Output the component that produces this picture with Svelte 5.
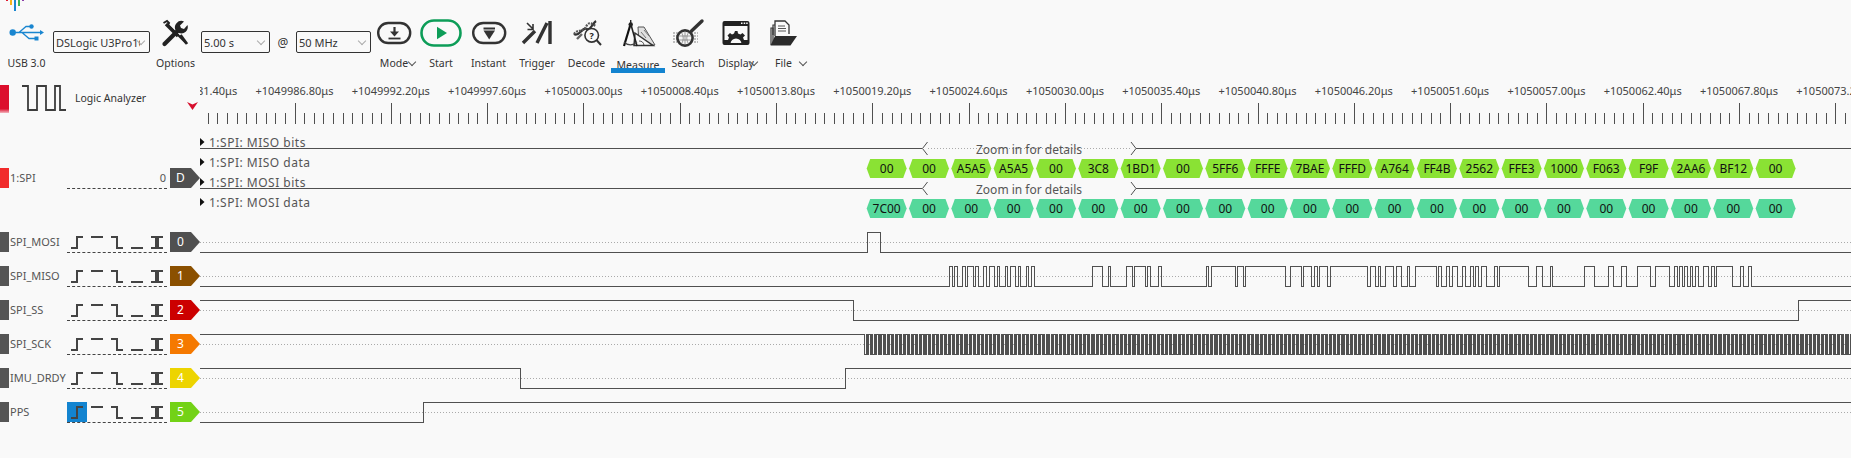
<script lang="ts">
	const BIT = 42.33 / 16;
	const X0 = 864.3;
	const OFF = 200; // traces start after the channel header column

	const misoWords = ['00', '00', 'A5A5', 'A5A5', '00', '3C8', '1BD1', '00', '5FF6', 'FFFE', '7BAE', 'FFFD', 'A764', 'FF4B', '2562', 'FFE3', '1000', 'F063', 'F9F', '2AA6', 'BF12', '00'];
	const mosiWords = ['7C00', ...Array(21).fill('00')];

	const stamps = [
		'1049981.40', '1049986.80', '1049992.20', '1049997.60', '1050003.00', '1050008.40', '1050013.80', '1050019.20', '1050024.60',
		'1050030.00', '1050035.40', '1050040.80', '1050046.20', '1050051.60', '1050057.00', '1050062.40', '1050067.80', '1050073.20'
	];

	const HI = 7.5;
	const LO = 27.5;

	const px = (x: number) => Math.round(x) + 0.5;

	// path from a start level and a list of edge positions (page x)
	function edges(startHigh: boolean, at: number[]) {
		let high = startHigh;
		let d = `M0 ${high ? HI : LO}`;
		for (const x of at) {
			const lx = px(x - OFF);
			high = !high;
			d += ` H${lx} V${high ? HI : LO}`;
		}
		return d + ' H1651';
	}

	function wordEdges(words: string[]) {
		const at: number[] = [];
		let prev = 0;
		words.forEach((w, i) => {
			const v = parseInt(w, 16);
			for (let b = 0; b < 16; b++) {
				const bit = (v >> (15 - b)) & 1;
				if (bit !== prev) at.push(X0 + (i * 16 + b) * BIT);
				prev = bit;
			}
		});
		return at;
	}

	function clockEdges() {
		const at: number[] = [];
		for (let x = X0; x < 1851; x += BIT / 2) at.push(x);
		return at;
	}

	const channels = [
		{ name: 'SPI_MOSI', tag: '0', color: '#505050', d: edges(false, wordEdges(mosiWords)) },
		{ name: 'SPI_MISO', tag: '1', color: '#8b5000', d: edges(false, wordEdges(misoWords)) },
		{ name: 'SPI_SS', tag: '2', color: '#cc0000', d: edges(true, [853.3, 1798.3]) },
		{ name: 'SPI_SCK', tag: '3', color: '#f57900', d: edges(true, clockEdges()) },
		{ name: 'IMU_DRDY', tag: '4', color: '#edd400', d: edges(true, [519.7, 845.3]) },
		{ name: 'PPS', tag: '5', color: '#73d216', d: edges(false, [422.6]) }
	];

	const ticks: { x: number; major: boolean }[] = [];
	for (let k = -9; k < 170; k++) {
		ticks.push({ x: px(294.5 + 9.63 * k - OFF), major: k % 10 === 0 });
	}

	const hexAt = (i: number) => 866.67 - OFF + i * 42.33;
	const hexPoints = (x: number, top: number) =>
		`${x},${top + 9.5} ${x + 3.5},${top} ${x + 36.5},${top} ${x + 40},${top + 9.5} ${x + 36.5},${top + 19} ${x + 3.5},${top + 19}`;

	const tools = [
		{ id: 'mode', label: 'Mode', menu: 'tight' },
		{ id: 'start', label: 'Start' },
		{ id: 'instant', label: 'Instant' },
		{ id: 'trigger', label: 'Trigger' },
		{ id: 'decode', label: 'Decode' },
		{ id: 'measure', label: 'Measure', active: true },
		{ id: 'search', label: 'Search' },
		{ id: 'display', label: 'Display', menu: 'over' },
		{ id: 'file', label: 'File', menu: 'wide' }
	];
</script>

{#snippet triggers(selected = false)}
	<div class="triggers">
		<svg class="trig" class:selected width="20" height="20" viewBox="0 0 20 20"><path d="M4 16H10V5H16" /></svg>
		<svg class="trig" width="20" height="20" viewBox="0 0 20 20"><path d="M4 5H16" /></svg>
		<svg class="trig" width="20" height="20" viewBox="0 0 20 20"><path d="M4 5H10V16H16" /></svg>
		<svg class="trig" width="20" height="20" viewBox="0 0 20 20"><path d="M4 16H16" /></svg>
		<svg class="trig" width="20" height="20" viewBox="0 0 20 20"><path d="M4 5H16M4 16H16M9 5V16M11 5V16" /></svg>
	</div>
{/snippet}

{#snippet icon(id: string)}
	{#if id === 'mode'}
		<svg width="46" height="30" viewBox="0 0 46 30">
			<rect x="7.2" y="5" width="32" height="20" rx="10" class="pill" />
			<path d="M23.5 9V16" stroke="#333" stroke-width="2.2" />
			<path d="M19 13.5H28L23.5 18.5Z" fill="#333" />
			<path d="M17.5 20.5H29.5" stroke="#333" stroke-width="1.8" />
		</svg>
	{:else if id === 'start'}
		<svg width="48" height="30" viewBox="0 0 48 30">
			<rect x="4.5" y="2.5" width="39" height="25" rx="12.5" fill="none" stroke="#0d9d58" stroke-width="2.6" />
			<path d="M20 8.7L30 15L20 21.3Z" fill="#0d9d58" />
		</svg>
	{:else if id === 'instant'}
		<svg width="47" height="30" viewBox="0 0 47 30">
			<rect x="8.2" y="5" width="32" height="20" rx="10" class="pill" />
			<path d="M18.5 9.5H30V11.5H18.5Z" fill="#333" />
			<path d="M18.5 12.5H30L24.2 21.5Z" fill="#333" />
		</svg>
	{:else if id === 'trigger'}
		<svg width="50" height="30" viewBox="0 0 50 30">
			<path d="M11 25L23 13M25 25L35 5M38 3V26" stroke="#333" stroke-width="3.4" fill="none" />
			<path d="M15 5L21 11M21 6V11.5H15.5" stroke="#333" stroke-width="1.6" fill="none" />
		</svg>
	{:else if id === 'decode'}
		<svg width="48" height="30" viewBox="0 0 48 30">
			<path d="M11 16C16 20 19 8 24 11C27 13 30 5 33 3" stroke="#333" stroke-width="2.2" fill="none" />
			<path d="M11 16C15 10 20 16 24 7C27 3 30 7 33 8" stroke="#555" stroke-width="2.2" stroke-dasharray="2 1" fill="none" />
			<path d="M14 21L19 16" stroke="#666" stroke-width="2.4" />
			<circle cx="28.7" cy="17.3" r="6.8" fill="#f9f9f9" stroke="#333" stroke-width="1.6" />
			<path d="M33.5 22L38 27" stroke="#333" stroke-width="2" />
			<text x="28.7" y="20.8" class="q">?</text>
		</svg>
	{:else if id === 'measure'}
		<svg width="54" height="30" viewBox="0 0 54 30">
			<path d="M27 9L33 9L44 27H28Z" fill="#e0e0e0" stroke="#555" stroke-width="1" />
			<path d="M30 14L35 20M33 12L38 18" stroke="#777" stroke-width="1" />
			<path d="M24 15L42 27.5H23Z" fill="#f9f9f9" stroke="#333" stroke-width="1.5" />
			<path d="M28 23A5 5 0 0 1 33 27" fill="none" stroke="#555" />
			<path d="M19.7 5.7L13 28" stroke="#111" stroke-width="2.2" />
			<path d="M19.7 5.7L26 28" stroke="#222" stroke-width="1.6" />
			<circle cx="19.7" cy="6.5" r="2.2" fill="#222" />
			<path d="M19.7 2V5" stroke="#222" stroke-width="1.4" />
			<path d="M13 24A9 9 0 0 0 26 24" fill="none" stroke="#444" stroke-width="1.2" />
		</svg>
	{:else if id === 'search'}
		<svg width="46" height="30" viewBox="0 0 46 30">
			<path d="M8 15H33M8 18H33M8 21H33M8 24H33" stroke="#aaa" stroke-width="1.6" stroke-dasharray="2 1" />
			<circle cx="20" cy="20" r="7.6" fill="#f4f4f4" stroke="#333" stroke-width="2.6" />
			<path d="M14 18H26M14 22H26M20 13V27M16.5 14.5Q20 20 16.5 26M23.5 14.5Q20 20 23.5 26" stroke="#777" stroke-width="0.7" fill="none" />
			<path d="M26.5 13L37 3" stroke="#333" stroke-width="3.4" stroke-linecap="round" />
		</svg>
	{:else if id === 'display'}
		<svg width="50" height="30" viewBox="0 0 50 30">
			<rect x="12.5" y="4" width="25" height="22" rx="1" fill="none" stroke="#222" stroke-width="2" />
			<path d="M12 4H38V8H12Z" fill="#222" />
			<path d="M30 5.2H31.5M32.7 5.2H34.2M35.2 5.2H36.7" stroke="#f9f9f9" stroke-width="1.4" />
			<path d="M13 26V22H17L18 19.5L16.5 17.5L19 15L21 16.5L23 15.5L24 13H26.5L27 15.5L29.5 16.5L31.5 15L34 17.5L32 19.5L33 22H37V26H30.5A5.5 5.5 0 0 0 19.5 26Z" fill="#222" />
		</svg>
	{:else if id === 'file'}
		<svg width="45" height="30" viewBox="0 0 45 30">
			<path d="M12 17V7H14" fill="none" stroke="#333" stroke-width="1.2" />
			<path d="M14 18V3H24L28 7V16" fill="#f9f9f9" stroke="#333" stroke-width="1.3" />
			<path d="M17 8H24M17 10.5H25M17 13H25" stroke="#555" stroke-width="1" />
			<path d="M10 27V10H12V25" fill="none" stroke="#333" stroke-width="1.2" />
			<path d="M14 18H36L29.5 27.5H9.5Z" fill="#2b2b2b" />
		</svg>
	{/if}
{/snippet}

<div class="logo">
	<i class="b1"></i><i class="b2"></i><i class="b3"></i><i class="b4"></i><i class="b5"></i>
</div>

<header class="toolbar">
	<div class="tool">
		<svg width="53" height="30" viewBox="0 0 53 30">
			<circle cx="12.7" cy="14.5" r="3.2" fill="#1a86d0" />
			<path d="M13 14.5H40M19 14.5L26 8.5H31M22 14.5L29 20.5H35" fill="none" stroke="#1a86d0" stroke-width="1.3" />
			<circle cx="31.5" cy="8.5" r="2.2" fill="#1a86d0" />
			<path d="M34.5 18.5H38.5V22.5H34.5Z" fill="#1a86d0" />
			<path d="M40 12L44 14.5L40 17Z" fill="#1a86d0" />
		</svg>
		<span class="label">USB 3.0</span>
	</div>

	<div class="combo"><select aria-label="Device"><option>DSLogic U3Pro16</option></select></div>

	<div class="tool">
		<svg width="51" height="30" viewBox="0 0 51 30">
			<path d="M13.5 5L17 3L19 5L18 7L36 25" fill="none" stroke="#222" stroke-width="2" />
			<path d="M16 6L28 18" stroke="#222" stroke-width="3.4" />
			<path d="M30.5 17L37 26" stroke="#222" stroke-width="2.8" />
			<path d="M14.5 26L28 12.5" stroke="#222" stroke-width="4.2" stroke-linecap="round" />
			<path d="M26 13A6.5 6.5 0 0 1 34 3.5L30 7.5L31 10L34 11L37.5 7A6.5 6.5 0 0 1 29 15Z" fill="#222" />
		</svg>
		<span class="label">Options</span>
	</div>

	<div class="combo"><select aria-label="Duration"><option>5.00 s</option></select></div>
	<span class="at">@</span>
	<div class="combo"><select aria-label="Samplerate"><option>50 MHz</option></select></div>

	{#each tools as t}
		<div class="tool" class:active={t.active}>
			{@render icon(t.id)}
			<span class="label {t.menu ?? ''}">{t.label}</span>
		</div>
	{/each}
</header>

<div class="row ruler-row">
	<div class="la-head">
		<i class="la-swatch"></i>
		<svg width="46" height="28" viewBox="0 0 46 28">
			<path d="M1 2H7V26H16V2H25V26H34V2H39V26H45" fill="none" stroke="#3c3c3c" stroke-width="1.8" />
		</svg>
		<span>Logic Analyzer</span>
		<svg class="cursor" width="11" height="8" viewBox="0 0 11 8"><path d="M0 0L5.5 2.5L11 0L5.5 8Z" fill="#d70f2d" /></svg>
	</div>
	<svg class="ruler" width="1651" height="44" viewBox="0 0 1651 44">
		{#each stamps as s, i}
			<text x={294.5 + 96.3 * (i - 1) - OFF} y="13" text-anchor="middle">+{s}μs</text>
		{/each}
		{#each ticks as t}
			<path d="M{t.x} {t.major ? 21 : 31}V42" />
		{/each}
	</svg>
</div>

<div class="row decoder-row">
	<div class="head">
		<i class="swatch spi"></i>
		<span class="name">1:SPI</span>
		<div class="triggers value">0</div>
		<span class="tag" style="--tag: #505050">D</span>
	</div>
	<svg class="decoder" width="1651" height="99" viewBox="0 0 1651 99">
		{#each [{ label: '1:SPI: MISO bits', y: 17 }, { label: '1:SPI: MISO data', y: 37 }, { label: '1:SPI: MOSI bits', y: 57 }, { label: '1:SPI: MOSI data', y: 77 }] as a}
			<path d="M0 {a.y - 5}L4.5 {a.y - 1}L0 {a.y + 3}Z" fill="#111" />
			<text class="ann side" x="9" y={a.y + 4}>{a.label}</text>
		{/each}
		{#each [22.5, 62.5] as y, i}
			<path class="wave" d="M0 {y}H722M936 {y}H1651" />
			<path class="chev" d="M727.5 {y - 6.5}L722.5 {y}L727.5 {y + 6.5}M931 {y - 6.5}L936 {y}L931 {y + 6.5}" />
			{#if i === 0}
				<path class="dots" d="M728 {y}H931" />
			{/if}
			<text class="ann" x="829" y={y + 5} text-anchor="middle">Zoom in for details</text>
		{/each}
		{#each misoWords as w, i}
			<polygon points={hexPoints(hexAt(i), 33)} fill="#8ae234" />
			<text class="hex" x={hexAt(i) + 20} y="47">{w}</text>
		{/each}
		{#each mosiWords as w, i}
			<polygon points={hexPoints(hexAt(i), 73)} fill="#55d89b" />
			<text class="hex" x={hexAt(i) + 20} y="87">{w}</text>
		{/each}
	</svg>
</div>

{#each channels as c, i}
	<div class="row channel">
		<div class="head">
			<i class="swatch"></i>
			<span class="name">{c.name}</span>
			{@render triggers(i === 5)}
			<span class="tag" style="--tag: {c.color}">{c.tag}</span>
		</div>
		<svg width="1651" height="34" viewBox="0 0 1651 34">
			<path class="dots" d="M0 17.5H1651" />
			<path class="wave" d={c.d} />
		</svg>
	</div>
{/each}

<style>
	:global(body) {
		background: #f9f9f9;
		font-family: 'Noto Sans', 'Liberation Sans', sans-serif;
		font-size: 12px;
		color: #333;
		overflow: hidden;
	}

	i {
		display: block;
	}

	svg {
		display: block;
	}

	/* App logo, cut off by the window top */
	.logo {
		display: flex;
		gap: 2px;
		height: 11px;
		padding-left: 6px;
		align-items: flex-start;
	}

	.logo i {
		width: 2px;
	}
	.b1 { height: 1px; background: #e01b2f; }
	.b2 { height: 5px; background: #f5b31a; }
	.b3 { height: 11px; background: #1a86d0; }
	.b4 { height: 6px; background: #3fb65a; }
	.b5 { height: 1px; background: #8a3fa8; }

	/* Toolbar */

	.toolbar {
		display: grid;
		grid-template-columns: 53px 97px 51px 69px 26px 75px 46px 48px 47px 50px 49px 54px 46px 50px 45px;
		height: 71px;
		padding-top: 7px;
		box-sizing: border-box;
		align-items: start;
	}

	.tool {
		display: flex;
		flex-direction: column;
		align-items: center;
		height: 56px;
		position: relative;
	}

	.label {
		position: relative;
		margin-top: 7px;
		height: 16px;
		line-height: 16px;
		white-space: nowrap;
		color: #333;
		font-size: 10.5px;
	}

	.label.tight::after,
	.label.over::after,
	.label.wide::after {
		content: '';
		position: absolute;
		left: 100%;
		top: 4px;
		width: 5px;
		height: 5px;
		border-right: 1px solid #555;
		border-bottom: 1px solid #555;
		transform: rotate(45deg);
	}

	.label.tight::after {
		margin-left: 1px;
	}

	.label.over::after {
		margin-left: -3px;
	}

	.label.wide::after {
		margin-left: 8px;
	}

	.active .label {
		margin-top: 9px;
	}

	.active::after {
		content: '';
		position: absolute;
		left: 0;
		right: 0;
		top: 50px;
		height: 5px;
		background: #1384d0;
	}

	.pill {
		fill: none;
		stroke: #333;
		stroke-width: 2.4;
	}

	.q {
		font-size: 9px;
		font-weight: 700;
		text-anchor: middle;
		fill: #222;
	}

	.combo {
		position: relative;
		margin-top: 13px;
		display: flex;
	}

	.combo::after {
		content: '';
		position: absolute;
		right: 6px;
		top: 7px;
		width: 5px;
		height: 5px;
		border-right: 1px solid #aaa;
		border-bottom: 1px solid #aaa;
		transform: rotate(45deg);
		pointer-events: none;
	}

	select {
		appearance: none;
		width: 100%;
		height: 22px;
		box-sizing: border-box;
		padding: 0 9px 0 2px;
		border: 1px solid #333;
		border-radius: 2px;
		background: transparent;
		color: #333;
		font: inherit;
		font-size: 11px;
	}

	.at {
		margin-top: 13px;
		line-height: 24px;
		text-align: center;
		font-size: 12px;
	}

	/* Rows */

	.row {
		display: grid;
		grid-template-columns: 200px 1651px;
	}

	.ruler-row {
		height: 44px;
	}

	.la-head {
		display: flex;
		align-items: flex-start;
		position: relative;
	}

	.la-swatch {
		width: 9px;
		height: 28px;
		margin-top: 3px;
		background: linear-gradient(#dc0f2d 85%, #f3b6bf);
	}

	.la-head svg:not(.cursor) {
		margin: 2px 0 0 12px;
	}

	.la-head span {
		margin: 8px 0 0 8px;
		line-height: 16px;
		font-size: 10.5px;
	}

	.cursor {
		position: absolute;
		left: 187px;
		top: 20px;
	}

	.ruler text {
		font-size: 11px;
		fill: #444;
	}

	.ruler path {
		stroke: #505050;
		stroke-width: 1;
		shape-rendering: crispEdges;
	}

	.decoder-row {
		height: 99px;
	}

	.decoder-row .head {
		align-self: end;
		margin-bottom: 37px;
	}

	.channel {
		height: 34px;
		align-items: center;
	}

	.head {
		display: grid;
		grid-template-columns: 9px 58px 100px 30px;
		height: 20px;
		align-items: start;
	}

	.swatch {
		width: 9px;
		height: 20px;
		background: #555;
	}

	.swatch.spi {
		background: #f12b2b;
	}

	.name {
		padding-left: 1px;
		line-height: 20px;
		font-size: 11px;
		color: #555;
		white-space: nowrap;
	}

	.triggers {
		display: flex;
		height: 21px;
		box-sizing: border-box;
		border-bottom: 1px dashed #444;
	}

	.triggers.value {
		justify-content: flex-end;
		line-height: 19px;
		font-size: 11px;
		color: #555;
		padding-right: 1px;
	}

	.trig {
		flex: none;
	}

	.trig.selected {
		background: #1384d0;
	}

	.trig path {
		fill: none;
		stroke: #444;
		stroke-width: 2;
		shape-rendering: crispEdges;
	}

	.tag {
		margin-left: 3px;
		width: 30px;
		height: 20px;
		padding-right: 9px;
		box-sizing: border-box;
		background: var(--tag);
		clip-path: polygon(0 0, 21px 0, 100% 50%, 21px 100%, 0 100%);
		color: #fff;
		font-size: 12px;
		line-height: 20px;
		text-align: center;
	}

	.wave {
		fill: none;
		stroke: #505050;
		stroke-width: 1;
		shape-rendering: crispEdges;
	}

	.chev {
		fill: none;
		stroke: #505050;
		stroke-width: 1;
	}

	.dots {
		fill: none;
		stroke: #aaa;
		stroke-width: 1;
		stroke-dasharray: 1 2;
		shape-rendering: crispEdges;
	}

	.ann {
		font-size: 12px;
		fill: #555;
	}

	.ann.side {
		letter-spacing: 0.5px;
	}

	.hex {
		font-size: 12px;
		text-anchor: middle;
		fill: #111;
	}
</style>
